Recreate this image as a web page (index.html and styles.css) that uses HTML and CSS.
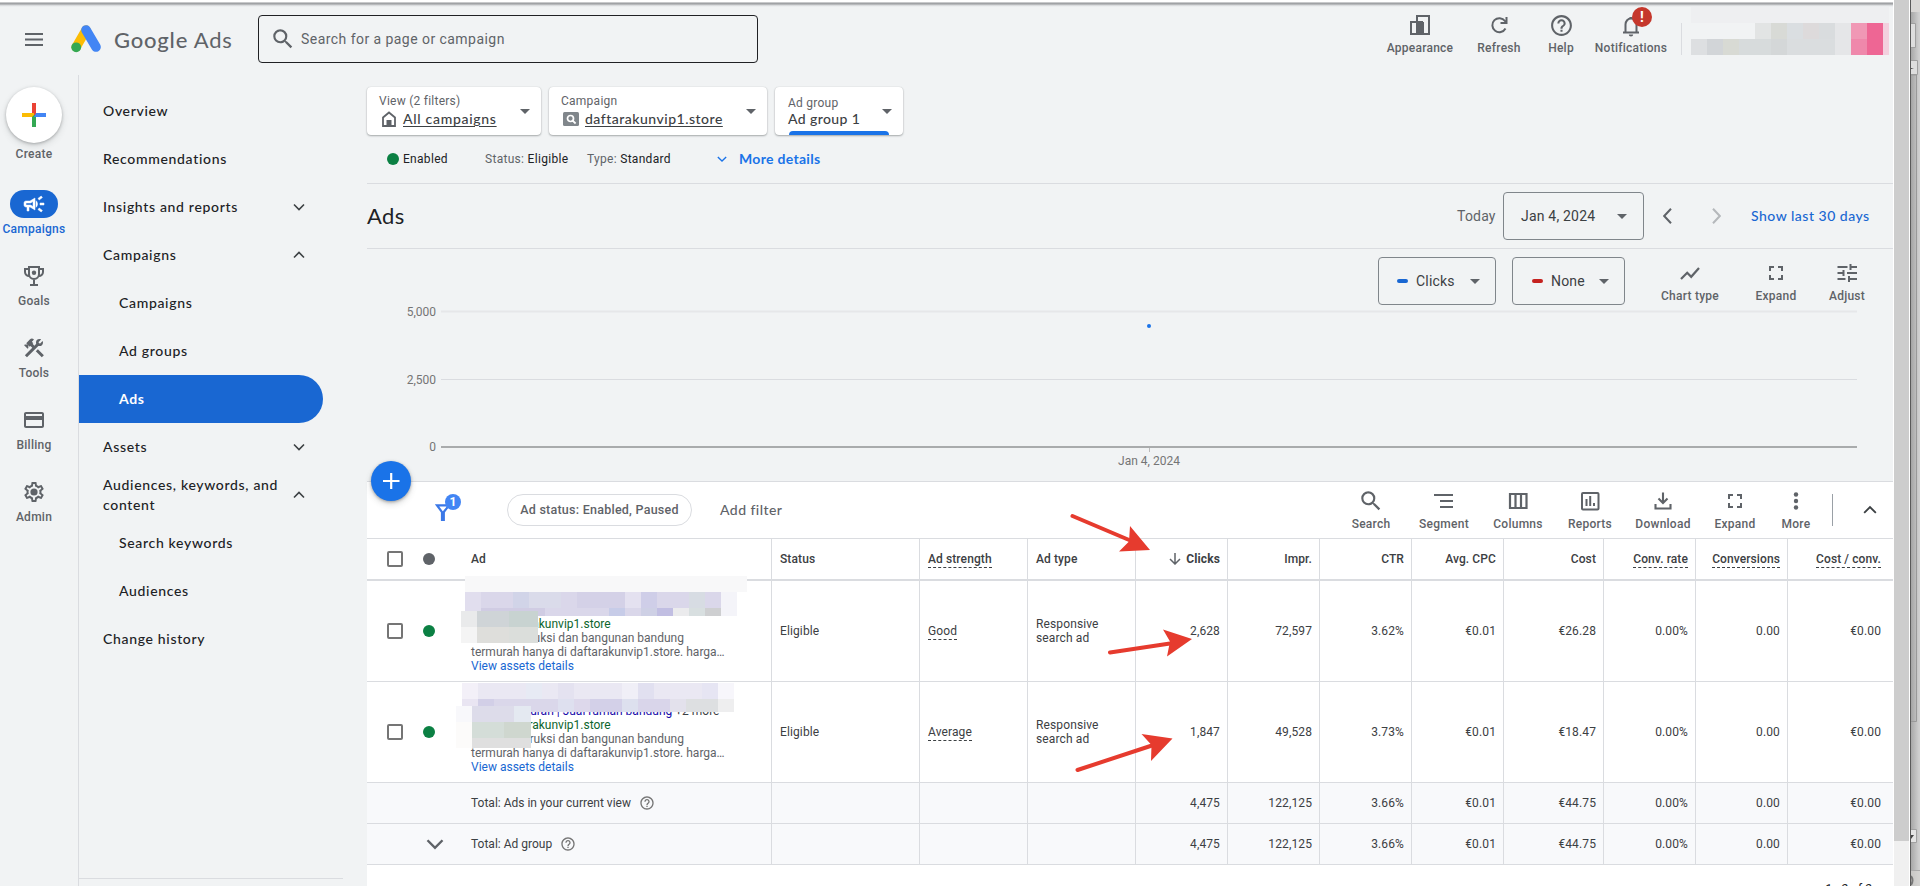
FILE: index.html
```html
<!DOCTYPE html>
<html lang="en">
<head>
<meta charset="utf-8">
<title>Ads - Google Ads</title>
<link rel="stylesheet" href="styles.css">
</head>
<body>
<svg class="defs" width="0" height="0">
  <symbol id="search" viewBox="0 0 24 24"><path d="M15.5 14h-.79l-.28-.27A6.47 6.47 0 0 0 16 9.5 6.5 6.5 0 1 0 9.5 16c1.61 0 3.09-.59 4.23-1.57l.27.28v.79l5 4.99L20.49 19l-4.99-5zm-6 0C7.01 14 5 11.99 5 9.5S7.01 5 9.5 5 14 7.01 14 9.5 11.99 14 9.5 14z"/></symbol>
  <symbol id="down" viewBox="0 0 12 12"><path d="M1 3.5l5 5 5-5" fill="none" stroke="currentColor" stroke-width="1.6"/></symbol>
  <symbol id="up" viewBox="0 0 12 12"><path d="M1 8.5l5-5 5 5" fill="none" stroke="currentColor" stroke-width="1.6"/></symbol>
  <symbol id="caret" viewBox="0 0 10 5"><path d="M0 0h10L5 5z"/></symbol>
  <symbol id="help" viewBox="0 0 24 24"><path d="M11 18h2v-2h-2v2zm1-16C6.48 2 2 6.48 2 12s4.48 10 10 10 10-4.48 10-10S17.52 2 12 2zm0 18c-4.41 0-8-3.59-8-8s3.59-8 8-8 8 3.59 8 8-3.59 8-8 8zm0-14c-2.21 0-4 1.79-4 4h2c0-1.1.9-2 2-2s2 .9 2 2c0 2-3 1.75-3 5h2c0-2.25 3-2.5 3-5 0-2.21-1.79-4-4-4z"/></symbol>
  <symbol id="expand" viewBox="0 0 24 24"><path d="M7 14H5v5h5v-2H7v-3zm-2-4h2V7h3V5H5v5zm12 7h-3v2h5v-5h-2v3zM14 5v2h3v3h2V5h-5z"/></symbol>
</svg>

<div class="app">
  <div class="topedge"></div>
  <header class="header">
    <svg class="menu" width="18" height="14" viewBox="0 0 18 14"><path d="M0 1h18M0 6.500h18M0 12h18" stroke="#5f6368" stroke-width="2"/></svg>
    <svg class="logo" width="30" height="28" viewBox="0 0 30 28"><path d="M5.200 22L15 5" stroke="#fbbc04" stroke-width="9.400" stroke-linecap="round"/><path d="M15 5l10 17" stroke="#4285f4" stroke-width="9.600" stroke-linecap="round"/><circle cx="5.200" cy="22.300" r="4.900" fill="#34a853"/></svg>
    <div class="brand"><b>Google</b> Ads</div>
    <div class="searchbox"><svg width="26" height="26"><use href="#search"/></svg><span>Search for a page or campaign</span></div>
    <div class="tools">
      <div class="tool t-appearance"><svg width="20" height="20" viewBox="0 0 20 20"><path d="M7 6V1h12v18H1V7h6M7 7v12M13 7v12" fill="none" stroke="currentColor" stroke-width="2"/><path d="M7 6h6v13H7z"/></svg><span>Appearance</span></div>
      <div class="tool t-refresh"><svg width="20" height="20" viewBox="0 0 20 20"><path d="M16.500 13.500A7 7 0 1 1 16 6L17 7" fill="none" stroke="currentColor" stroke-width="2"/><path d="M18.500 2v7h-7V7h5V2z"/></svg><span>Refresh</span></div>
      <div class="tool t-help"><svg width="25" height="25"><use href="#help"/></svg><span>Help</span></div>
      <div class="tool t-notif"><svg width="22" height="22" viewBox="0 0 22 22"><path d="M5.500 17V9.500a5.500 6 0 0 1 11 0V17M3 17.500h16" fill="none" stroke="currentColor" stroke-width="2"/><path d="M8.800 19.500h4.400a2.200 2 0 0 1-4.400 0zM9.500 2h3v2h-3z"/></svg><span>Notifications</span><i class="alert">!</i></div>
    </div>
    <div class="account">
      <svg width="198" height="51" viewBox="0 0 198 51"><path d="M0 0h198v16H0z" fill="#eeeff1"/><path d="M64 16h16v16H64z" fill="#e2e4e4"/><path d="M80 16h16v16H80z" fill="#d8dad6"/><path d="M96 16h16v16H96z" fill="#dadee1"/><path d="M112 16h16v16h-16z" fill="#dddadb"/><path d="M128 16h16v16h-16z" fill="#d9dcde"/><path d="M144 16h16v32h-16z" fill="#e5e6e8"/><path d="M0 32h16v16H0z" fill="#dddfe1"/><path d="M16 32h16v16H16z" fill="#d2d5d8"/><path d="M32 32h16v16H32z" fill="#d8dad4"/><path d="M48 32h32v16H48z" fill="#d7dbdc"/><path d="M80 32h16v16H80z" fill="#d4d7d8"/><path d="M96 32h48v16H96z" fill="#dadddf"/><path d="M160 16h16v16h-16z" fill="#f098b5"/><path d="M160 32h16v16h-16z" fill="#ef88ab"/><path d="M176 16h16v32h-16z" fill="#ee6694"/><path d="M192 16h6v32h-6z" fill="#f3d0de"/></svg>
    </div>
  </header>

  <div class="body">
    <aside class="rail">
      <div class="create"><svg width="24" height="24" viewBox="0 0 24 24"><path d="M10 0h4v12h-4z" fill="#ea4335"/><path d="M0 10h12v4H0z" fill="#fbbc04"/><path d="M10 14l2-2h2v12h-4z" fill="#34a853"/><path d="M14 10h10v4H12z" fill="#4285f4"/></svg></div>
      <span class="createlabel">Create</span>
      <div class="railitem on"><i><svg width="24" height="24" viewBox="0 0 24 24"><path d="M18 11v2h4v-2h-4zm-2 6.610c.96.71 2.210 1.650 3.200 2.390.4-.53.8-1.070 1.200-1.600-.99-.74-2.240-1.680-3.200-2.400-.4.540-.8 1.080-1.200 1.610zM20.400 5.600c-.4-.53-.8-1.070-1.200-1.600-.99.740-2.240 1.680-3.200 2.400.4.530.8 1.070 1.200 1.600.96-.72 2.210-1.650 3.200-2.400zM4 9c-1.100 0-2 .9-2 2v2c0 1.100.9 2 2 2h1v4h2v-4h1l5 3V6L8 9H4zm5.030 1.710L11 9.530v4.940l-1.970-1.180-.48-.29H4v-2h4.550l.48-.29zM15.500 12c0-1.330-.58-2.530-1.500-3.350v6.690c.92-.81 1.500-2.010 1.500-3.340z" stroke="#fff" stroke-width=".5"/></svg></i><span>Campaigns</span></div>
      <div class="railitem"><i><svg width="24" height="24" viewBox="0 0 24 24"><path d="M7 3h10v7a5 5 0 0 1-10 0zM7 5H3V8a4 4 0 0 0 4.500 4M17 5h4V8a4 4 0 0 1-4.500 4M12 15v5M8 21h8" fill="none" stroke="currentColor" stroke-width="2"/><circle cx="12" cy="8.800" r="2.200"/></svg></i><span>Goals</span></div>
      <div class="railitem"><i><svg width="24" height="24" viewBox="0 0 24 24"><path d="M13.780 15.300l6 6 2.110-2.160-6-6-2.110 2.160zm3.720-5.200c-.39 0-.81-.05-1.140-.19L4.970 21.250l-2.110-2.110 7.410-7.400L8.500 9.960l-.72.7-1.450-1.410v2.860l-.7.7-3.520-3.560.7-.7h2.810l-1.400-1.410 3.560-3.560a2.976 2.976 0 0 1 4.220 0L9.890 5.740l1.410 1.400-.71.71 1.790 1.780 1.820-1.880c-.14-.33-.2-.75-.2-1.120a3.490 3.490 0 0 1 3.500-3.520c.59 0 1.110.14 1.580.42L16.410 6.200l1.500 1.500 2.670-2.670c.28.47.42.970.42 1.600 0 1.920-1.550 3.470-3.500 3.470z"/></svg></i><span>Tools</span></div>
      <div class="railitem"><i><svg width="24" height="24" viewBox="0 0 24 24"><path d="M20 4H4c-1.110 0-2 .89-2 2v12c0 1.110.89 2 2 2h16c1.110 0 2-.89 2-2V6c0-1.110-.89-2-2-2zm0 14H4v-6h16v6zm0-10H4V6h16v2z"/></svg></i><span>Billing</span></div>
      <div class="railitem"><i><svg width="24" height="24" viewBox="0 0 24 24"><circle cx="12" cy="12" r="3.600"/><path d="M10 22c-.25 0-.46-.18-.5-.42l-.37-2.650c-.63-.25-1.170-.59-1.690-.99l-2.490 1.010c-.22.08-.49 0-.61-.22l-2-3.460c-.13-.22-.07-.49.12-.64l2.110-1.660L4.500 12l.07-1-2.110-1.630c-.19-.15-.25-.42-.12-.64l2-3.460c.12-.22.39-.31.61-.22l2.490 1c.52-.39 1.060-.73 1.690-.98l.37-2.650c.04-.24.25-.42.5-.42h4c.25 0 .46.18.5.42l.37 2.650c.63.25 1.170.59 1.690.98l2.490-1c.22-.09.49 0 .61.22l2 3.460c.13.22.07.49-.12.64L19.430 11l.07 1-.07 1 2.110 1.630c.19.15.25.42.12.64l-2 3.460c-.12.22-.39.31-.61.22l-2.490-1c-.52.39-1.060.73-1.690.98l-.37 2.650c-.04.24-.25.42-.5.42h-4m1.250-18l-.37 2.610c-1.200.25-2.260.89-3.030 1.780L5.440 7.350l-.75 1.300L6.800 10.200a5.550 5.550 0 0 0 0 3.600l-2.120 1.560.75 1.300 2.430-1.040c.77.88 1.820 1.520 3.010 1.760l.37 2.620h1.520l.37-2.610c1.190-.25 2.240-.89 3.010-1.770l2.430 1.040.75-1.300-2.120-1.550c.4-1.170.4-2.440 0-3.610l2.110-1.550-.75-1.300-2.410 1.040a5.420 5.420 0 0 0-3.030-1.770L12.750 4h-1.500z"/></svg></i><span>Admin</span></div>
    </aside>

    <nav class="nav">
      <a>Overview</a>
      <a>Recommendations</a>
      <a>Insights and reports<svg width="12" height="12"><use href="#down"/></svg></a>
      <a>Campaigns<svg width="12" height="12"><use href="#up"/></svg></a>
      <a class="sub">Campaigns</a>
      <a class="sub">Ad groups</a>
      <a class="sub on">Ads</a>
      <a>Assets<svg width="12" height="12"><use href="#down"/></svg></a>
      <a>Audiences, keywords, and<br>content<svg width="12" height="12"><use href="#up"/></svg></a>
      <a class="sub">Search keywords</a>
      <a class="sub">Audiences</a>
      <a>Change history</a>
      <div class="navend"></div>
    </nav>

    <main class="main">
      <section class="scope">
        <div class="card c1"><div><small>View (2 filters)</small><p><svg width="24" height="16" viewBox="0 0 24 16"><path d="M4 15V6.500L10 1.500l6 5V15z" fill="none" stroke="#5f6368" stroke-width="1.800"/><path d="M7.500 9h5v6h-5z" fill="#5f6368"/></svg><u>All campaigns</u></p></div><svg class="caret" width="10" height="5"><use href="#caret"/></svg></div>
        <div class="card c2"><div><small>Campaign</small><p><svg width="24" height="16" viewBox="0 0 24 16"><rect x="2" y="1" width="16" height="14" rx="1.500" fill="#80868b"/><circle cx="9.500" cy="7.500" r="3" fill="none" stroke="#fff" stroke-width="1.700"/><path d="M11.600 9.700l3 2.800" stroke="#fff" stroke-width="1.800"/></svg><u>daftarakunvip1.store</u></p></div><svg class="caret" width="10" height="5"><use href="#caret"/></svg></div>
        <div class="card c3"><div><small>Ad group</small><p>Ad group 1</p></div><svg class="caret" width="10" height="5"><use href="#caret"/></svg><i class="underbar"></i></div>
      </section>
      <section class="status">
        <i class="dot"></i><b class="s1">Enabled</b><span class="s2">Status: <b>Eligible</b></span><span class="s3">Type: <b>Standard</b></span>
        <svg width="10" height="10"><use href="#down"/></svg><a>More details</a>
      </section>
      <section class="titlebar">
        <h1>Ads</h1>
        <span class="today">Today</span>
        <div class="select date"><span>Jan 4, 2024</span><svg width="10" height="5"><use href="#caret"/></svg></div>
        <svg class="prev" width="9" height="16" viewBox="0 0 9 16"><path d="M8 .7L1.200 8 8 15.300" fill="none" stroke="#5f6368" stroke-width="2"/></svg>
        <svg class="next" width="9" height="16" viewBox="0 0 9 16"><path d="M1 .7L7.800 8 1 15.300" fill="none" stroke="#b5b8bb" stroke-width="2"/></svg>
        <a>Show last 30 days</a>
      </section>
      <section class="chart">
        <div class="controls">
          <div class="select m1"><i class="blue"></i><span>Clicks</span><svg width="10" height="5"><use href="#caret"/></svg></div>
          <div class="select m2"><i class="red"></i><span>None</span><svg width="10" height="5"><use href="#caret"/></svg></div>
          <div class="tool k1"><svg width="24" height="24" viewBox="0 0 24 24"><path d="M3 18l6.200-6.200 4 4L21 7" fill="none" stroke="currentColor" stroke-width="2.200"/></svg><span>Chart type</span></div>
          <div class="tool k2"><svg width="24" height="24"><use href="#expand"/></svg><span>Expand</span></div>
          <div class="tool k3"><svg width="24" height="24" viewBox="0 0 24 24"><path d="M2.500 6h10M16 6h6M15.500 3v6M2.500 12h6M12 12h10M8.500 9v6M2.500 18h8M14 18h8M14 15v6" fill="none" stroke="currentColor" stroke-width="2"/></svg><span>Adjust</span></div>
        </div>
        <svg class="plot" width="1526" height="176" viewBox="0 0 1526 176">
          <path d="M74 6.500h1416" stroke="#e6e7e9" stroke-width="2"/>
          <path d="M74 74.500h1416" stroke="#dadce0"/>
          <path d="M74 142h1416" stroke="#a9abac" stroke-width="2"/>
          <path d="M782.500 143v4" stroke="#bbb"/>
          <circle cx="782" cy="21" r="2" fill="#1a73e8"/>
          <g text-anchor="end"><text x="69" y="11">5,000</text><text x="69" y="79">2,500</text><text x="69" y="146">0</text></g>
          <text x="782" y="159.500" text-anchor="middle">Jan 4, 2024</text>
        </svg>
        <button class="fab"><svg width="18" height="18" viewBox="0 0 18 18"><path d="M9.200 1v16M1 9h16.500" stroke="#fff" stroke-width="2.200"/></svg></button>
      </section>
      <section class="filterbar">
        <div class="filter"><svg width="16" height="17" viewBox="0 0 16 17"><path d="M2 1.300h12L8.800 8v8H7V8z" fill="none" stroke="#3b78e7" stroke-width="2.200"/></svg><i>1</i></div>
        <span class="chip">Ad status: Enabled, Paused</span>
        <span class="addfilter">Add filter</span>
        <div class="actions">
          <div class="tool a1"><svg width="26" height="26"><use href="#search"/></svg><span>Search</span></div>
          <div class="tool a2"><svg width="20" height="20" viewBox="0 0 20 20"><path d="M0 4h19M6 10h13M6 16h13" stroke="currentColor" stroke-width="2"/></svg><span>Segment</span></div>
          <div class="tool a3"><svg width="20" height="20" viewBox="0 0 20 20"><path d="M2 3h16.500v14H2zM7.500 3v14M13 3v14" fill="none" stroke="currentColor" stroke-width="2.200"/></svg><span>Columns</span></div>
          <div class="tool a4"><svg width="20" height="20" viewBox="0 0 20 20"><rect x="2" y="2" width="16.500" height="16.500" rx="1" fill="none" stroke="currentColor" stroke-width="2"/><path d="M6.500 8v7M10.200 5v10M14 12v3" stroke="currentColor" stroke-width="2"/></svg><span>Reports</span></div>
          <div class="tool a5"><svg width="20" height="20" viewBox="0 0 20 20"><path d="M10 1.500v10M5.500 7.500L10 12l4.500-4.500M2.500 13v4.500h15V13" fill="none" stroke="currentColor" stroke-width="2.100"/></svg><span>Download</span></div>
          <div class="tool a6"><svg width="24" height="24"><use href="#expand"/></svg><span>Expand</span></div>
          <div class="tool a7"><svg width="20" height="20" viewBox="0 0 20 20"><circle cx="10" cy="3.500" r="2.200"/><circle cx="10" cy="10" r="2.200"/><circle cx="10" cy="16.500" r="2.200"/></svg><span>More</span></div>
          <div class="sep"></div>
          <svg class="collapse" width="14" height="14"><use href="#up"/></svg>
        </div>
      </section>

      <section class="table">
        <div class="row head">
          <div class="ad"><i class="box"></i><i class="dot gray"></i><span>Ad</span></div><div>Status</div><div><u>Ad strength</u></div><div>Ad type</div>
          <div class="n sorted"><svg width="12" height="12" viewBox="0 0 12 12"><path d="M6 0v10.500M1 6l5 5 5-5" fill="none" stroke="#5f6368" stroke-width="1.500"/></svg>Clicks</div><div class="n">Impr.</div><div class="n">CTR</div><div class="n">Avg. CPC</div><div class="n">Cost</div><div class="n"><u>Conv. rate</u></div><div class="n"><u>Conversions</u></div><div class="n"><u>Cost / conv.</u></div>
        </div>
        <div class="row item">
          <div class="ad"><i class="box"></i><i class="dot"></i>
            <div class="copy"><p class="title">&nbsp;</p><p class="url">www.daftarakunvip1.store</p><p>Jasa konstruksi dan bangunan bandung</p><p>termurah hanya di daftarakunvip1.store. harga…</p><p class="link">View assets details</p></div>
            <svg class="mosaic" width="290" height="68" viewBox="0 0 290 68"><path d="M4 0h282v16H4z" fill="#f8f8f9"/><g fill="#dad7ea"><path d="M4 16h256v16H4zM20 32h240v8H20z"/></g><path d="M4 16h16v24H4z" fill="#e1deee"/><path d="M52 16h16v16H52z" fill="#d1d4e8"/><path d="M68 16h32v16H68z" fill="#dadbea"/><path d="M116 16h48v16h-48z" fill="#d4d1e7"/><path d="M164 16h16v16h-16z" fill="#e4e1f0"/><path d="M180 16h16v16h-16z" fill="#cfcee8"/><path d="M228 16h16v16h-16z" fill="#d7dce3"/><path d="M260 16h16v24h-16z" fill="#f4f4f9"/><path d="M20 32h64v8H20z" fill="#d0cce3"/><path d="M148 32h16v8h-16z" fill="#c7cce8"/><path d="M180 32h16v8h-16z" fill="#ced0e5"/><path d="M196 32h16v8h-16z" fill="#c1bee2"/><path d="M212 32h16v8h-16z" fill="#ebebed"/><path d="M228 32h16v8h-16z" fill="#d8dfe0"/><path d="M244 32h16v8h-16z" fill="#cecfd1"/><path d="M0 35h16v16H0z" fill="#e9eaeb"/><path d="M16 35h32v16H16z" fill="#cfd4d7"/><path d="M48 35h29v16H48z" fill="#c8d3d1"/><path d="M0 51h16v16H0z" fill="#f4f4f4"/><path d="M16 51h32v16H16z" fill="#dededb"/><path d="M48 51h29v16H48z" fill="#dbdedb"/></svg>
          </div><div>Eligible</div><div><u>Good</u></div><div>Responsive<br>search ad</div><div class="n">2,628</div><div class="n">72,597</div><div class="n">3.62%</div><div class="n">€0.01</div><div class="n">€26.28</div><div class="n">0.00%</div><div class="n">0.00</div><div class="n">€0.00</div>
        </div>
        <div class="row item">
          <div class="ad"><i class="box"></i><i class="dot"></i>
            <div class="copy"><p class="title"><span>Rumah murah | Jual rumah bandung</span> +2 more</p><p class="url">www.daftarakunvip1.store</p><p>Jasa konstruksi dan bangunan bandung</p><p>termurah hanya di daftarakunvip1.store. harga…</p><p class="link">View assets details</p></div>
            <svg class="mosaic second" width="290" height="68" viewBox="0 0 290 68"><path d="M6 0h272v16H6z" fill="#eae8f3"/><path d="M6 0h16v16H6z" fill="#f3f0f8"/><path d="M70 0h16v16H70z" fill="#e7eaf4"/><path d="M102 0h16v16h-16z" fill="#e4e2f0"/><path d="M166 0h16v16h-16z" fill="#f0eff7"/><path d="M182 0h16v16h-16z" fill="#e1e0f0"/><path d="M246 0h16v16h-16z" fill="#e6e5f3"/><path d="M262 0h16v16h-16z" fill="#f7f6fb"/><path d="M6 16h16v13H6z" fill="#e9e5f2"/><path d="M22 16h16v13H22z" fill="#d2cfe7"/><path d="M38 16h64v13H38z" fill="#dad7ea"/><path d="M102 16h16v13h-16z" fill="#dee0ef"/><path d="M118 16h16v13h-16z" fill="#ddd8eb"/><path d="M134 16h32v13h-32z" fill="#d3d0e8"/><path d="M166 16h16v13h-16z" fill="#dde0ee"/><path d="M182 16h32v13h-32z" fill="#d9d5ea"/><path d="M214 16h16v13h-16z" fill="#e3e1ec"/><path d="M230 16h32v13h-32z" fill="#dddfe1"/><path d="M262 16h16v13h-16z" fill="#eeeeef"/><path d="M0 23h16v16H0z" fill="#f8f8fb"/><path d="M16 23h42v16H16z" fill="#dddcea"/><path d="M58 23h17v16H58z" fill="#e4e9f1"/><path d="M16 39h32v16H16z" fill="#d4ddd8"/><path d="M48 39h27v16H48z" fill="#cfd7cf"/><path d="M0 39h16v26H0z" fill="#fcfbfa"/><path d="M16 55h59v10H16z" fill="#dfdfdf"/></svg>
          </div><div>Eligible</div><div><u>Average</u></div><div>Responsive<br>search ad</div><div class="n">1,847</div><div class="n">49,528</div><div class="n">3.73%</div><div class="n">€0.01</div><div class="n">€18.47</div><div class="n">0.00%</div><div class="n">0.00</div><div class="n">€0.00</div>
        </div>
        <div class="row total">
          <div class="ad"><span class="lead"></span>Total: Ads in your current view<svg width="16" height="16"><use href="#help"/></svg></div><div></div><div></div><div></div><div class="n">4,475</div><div class="n">122,125</div><div class="n">3.66%</div><div class="n">€0.01</div><div class="n">€44.75</div><div class="n">0.00%</div><div class="n">0.00</div><div class="n">€0.00</div>
        </div>
        <div class="row total">
          <div class="ad"><span class="lead"><svg width="18" height="18"><use href="#down"/></svg></span>Total: Ad group<svg width="16" height="16"><use href="#help"/></svg></div><div></div><div></div><div></div><div class="n">4,475</div><div class="n">122,125</div><div class="n">3.66%</div><div class="n">€0.01</div><div class="n">€44.75</div><div class="n">0.00%</div><div class="n">0.00</div><div class="n">€0.00</div>
        </div>
      </section>
      <footer class="pager">1 - 2 of 2</footer>
    </main>
  </div>
</div>
<div class="scrollbar"><i></i></div>
<div class="desktop"><svg width="10" height="886" viewBox="0 0 10 886"><path d="M0 0h10v12H0z" fill="#dad8d6"/><path d="M0 23.500h4.500v24H0M0 60.500h6.500v14H0" fill="#dedede" stroke="#a0a0a0"/><path d="M0 68l3 1H0z" fill="#444"/><path d="M0 75h6v646H0z" fill="#000" fill-opacity=".02"/><path d="M0 75h5.500v646.500H0" fill="none" stroke="#999"/><path d="M0 829.500h5.500v13H0" fill="#e4e4e4" stroke="#a0a0a0"/><path d="M0 835h3l-3 4z" fill="#444"/><path d="M0 870.500h10" stroke="#aaa"/><path d="M0 871h10v15H0z" fill="#d6d4d2" fill-opacity=".7"/><path d="M0 876q3 4 0 9" fill="none" stroke="#777" stroke-width="2"/></svg></div>

<svg class="marks" width="140" height="280" viewBox="1060 500 140 280">
  <g stroke="#e63b2e" stroke-width="4" stroke-linecap="round"><path d="M1072.500 516l59 25M1110 652.500l60-9M1077.500 770l76-25"/></g>
  <g fill="#e63b2e"><path d="M1150 550l-20-24-1 15.500-10 10zM1192 639l-29-9.500 7 12-3 15zM1172.500 738.500l-31-4.500 10 11-.5 16z"/></g>
</svg>
</body>
</html>
```
FILE: styles.css
```css
* { box-sizing: border-box; }
body { margin: 0; width: 1920px; height: 886px; overflow: hidden; display: flex; position: relative; background: #f1f3f4; color: #3c4043; font: 12px/14px Roboto, "Liberation Sans", sans-serif; }
svg { display: block; flex: none; fill: currentColor; }
i { font-style: normal; }
p, h1 { margin: 0; }
.defs { position: absolute; }

.app { width: 1893px; height: 886px; display: flex; flex-direction: column; overflow: hidden; flex: none; }
.topedge { height: 7px; flex: none; background: linear-gradient(#fff 0 2px, #c8c9cb 2px 3px, #a0a2a5 3px 4px, #cfd1d3 5px, #e6e8ea 6px, #f1f3f4); }
.header { height: 68px; flex: none; display: flex; align-items: flex-start; }
.menu { margin: 26px 0 0 25px; }
.logo { margin: 18px 0 0 28px; }
.brand { margin: 19px 0 0 13px; width: 131px; color: #5f6368; font: 22px/28px Lato, sans-serif; letter-spacing: .8px; white-space: nowrap; }
.brand b { font-weight: 500; }
.searchbox { margin: 8px 0 0 13px; width: 500px; flex: none; height: 48px; border: 1px solid #202124; border-radius: 4px; display: flex; align-items: center; padding-left: 11px; color: #5f6368; }
.searchbox span { margin-left: 5px; font-size: 14px; letter-spacing: .45px; }
.tools { display: flex; margin-left: 609px; }
.tool { display: flex; flex-direction: column; align-items: center; color: #5f6368; font-weight: 500; letter-spacing: .25px; white-space: nowrap; position: relative; }
.tool svg { margin: 0 auto; }
.tools .tool { height: 50px; }
.tools .tool svg { margin-top: 8px; }
.tools .tool span { position: absolute; top: 34px; }
.t-appearance { width: 106px; }
.t-refresh { width: 52px; }
.t-help { width: 72px; }
.tools .t-help svg { margin-top: 6px; }
.t-notif { width: 68px; }
.alert { position: absolute; left: 35px; top: 0; width: 20px; height: 20px; border-radius: 50%; background: #c5372c; color: #fff; font: 700 14px/20px Roboto, sans-serif; text-align: center; letter-spacing: 0; }
.account { border-left: 1px solid #dadce0; height: 32px; margin: 16px 0 0 16px; padding-left: 9px; }
.account svg { margin-top: -16px; }

.body { display: flex; flex: 1; min-height: 0; }
.rail { width: 79px; border-right: 1px solid #dadce0; padding-top: 12px; flex: none; }
.create { width: 56px; height: 56px; margin-left: 6px; border-radius: 50%; background: #fff; box-shadow: 0 1px 3px rgba(60,64,67,.35), 0 3px 7px rgba(60,64,67,.15); display: grid; place-items: center; }
.createlabel { display: block; width: 68px; margin: 4px 0 29px; text-align: center; font-weight: 500; color: #5f6368; letter-spacing: .25px; }
.railitem { width: 68px; height: 72px; display: flex; flex-direction: column; align-items: center; color: #5f6368; font-weight: 500; letter-spacing: .25px; }
.railitem i { width: 48px; height: 28px; border-radius: 14px; display: grid; place-items: center; margin-bottom: 4px; }
.railitem.on { color: #1967d2; }
.railitem.on i { background: #1967d2; color: #fff; }

.nav { width: 288px; padding-top: 12px; flex: none; color: #202124; font: 500 14px/20px Lato, sans-serif; letter-spacing: .67px; }
.nav a { display: flex; height: 48px; width: 244px; align-items: center; padding: 0 0 1px 24px; position: relative; white-space: nowrap; }
.nav a svg { position: absolute; left: 214px; color: #3c4043; top: 18px; }
.nav .sub { padding-left: 40px; }
.nav .on { background: #1967d2; color: #fff; font-weight: 700; border-radius: 0 24px 24px 0; padding-bottom: 0; }
.navend { margin-top: 215px; width: 264px; border-top: 1px solid #dadce0; }

.main { width: 1526px; display: flex; flex-direction: column; }
.main > section { flex: none; }
.scope { display: flex; gap: 8px; padding-top: 12px; }
.card { height: 48px; background: #fff; border-radius: 4px; box-shadow: 0 1px 2px rgba(60,64,67,.4), 0 0 1px rgba(60,64,67,.25); display: flex; justify-content: space-between; align-items: center; padding: 0 11px 0 12px; position: relative; color: #5f6368; letter-spacing: .25px; }
.card small { display: block; font-size: 12px; line-height: 14px; margin-top: 1px; }
.card p { display: flex; align-items: center; font: 500 14px/20px Lato, sans-serif; letter-spacing: .5px; color: #3c4043; margin-top: 1px; }
.card u { text-underline-offset: 2px; }
.caret { margin-top: 1px; }
.c1 { width: 174px; }
.c1 p { letter-spacing: .7px; }
.c2 { width: 218px; }
.c3 { width: 128px; padding-left: 13px; }
.c3 small { margin-top: 3px; }
.c3 p { margin-top: -1px; letter-spacing: .4px; }
.underbar { position: absolute; left: 14px; bottom: 0; width: 100px; height: 4px; background: #1a73e8; border-radius: 4px 4px 0 0; }
.status { height: 49px; border-bottom: 1px solid #dadce0; display: flex; align-items: center; color: #5f6368; padding-left: 20px; letter-spacing: .3px; white-space: nowrap; }
.status b { font-weight: 400; color: #202124; }
.dot { width: 12px; height: 12px; border-radius: 50%; background: #0b8043; flex: none; }
.s1 { margin-left: 4px; width: 82px; }
.s2 { width: 102px; }
.s3 { width: 130px; }
.status svg { color: #1a73e8; }
.status a { color: #1a73e8; font: 700 14px/20px Lato, sans-serif; margin-left: 12px; letter-spacing: .3px; }
.titlebar { height: 65px; border-bottom: 1px solid #dadce0; display: flex; align-items: center; }
.titlebar h1 { font: 400 22px/28px Lato, sans-serif; color: #202124; width: 1090px; letter-spacing: .4px; }
.today { font-size: 14px; letter-spacing: .2px; width: 46px; color: #5f6368; }
.select { height: 48px; flex: none; border: 1px solid #80868b; border-radius: 4px; display: flex; align-items: center; font-size: 14px; letter-spacing: .2px; color: #3c4043; }
.select svg { color: #5f6368; margin-left: auto; }
.date { width: 141px; padding: 0 16px 0 17px; }
.prev { margin-left: 19px; }
.next { margin-left: 40px; }
.titlebar a { color: #1967d2; font: 500 14px/20px Lato, sans-serif; letter-spacing: .5px; margin-left: 30px; white-space: nowrap; }

.chart { height: 233px; position: relative; border-bottom: 1px solid #dadce0; display: flex; flex-direction: column; padding-top: 8px; }
.controls { display: flex; height: 48px; padding-left: 1011px; }
.select i { width: 11px; height: 4px; border-radius: 2px; margin-right: 8px; }
.blue { background: #1967d2; }
.red { background: #c5221f; }
.m1 { width: 118px; padding: 0 15px 0 18px; margin-right: 16px; }
.m2 { width: 113px; padding: 0 15px 0 19px; }
.controls .tool { flex: none; }
.controls .tool svg { margin-top: 4px; margin-bottom: 4px; }
.k1 { width: 130px; }
.k2 { width: 42px; }
.k3 { width: 100px; }
.plot text { font: 12px Roboto, sans-serif; fill: #757575; letter-spacing: 0; }
.fab { position: absolute; left: 4px; bottom: -20px; width: 40px; height: 40px; border: 0; padding: 0; border-radius: 50%; background: #1a73e8; box-shadow: 0 1px 3px rgba(0,0,0,.3), 0 3px 6px rgba(60,64,67,.2); display: grid; place-items: center; z-index: 2; }

.filterbar { height: 57px; background: #fff; border-bottom: 1px solid #dadce0; display: flex; align-items: center; white-space: nowrap; }
.filter { position: relative; width: 26px; height: 26px; margin-left: 68px; }
.filter svg { margin-top: 7px; }
.filter i { position: absolute; left: 10px; top: -3px; width: 16px; height: 16px; border-radius: 50%; background: #4285f4; color: #fff; text-align: center; font: 700 12px/16px Roboto, sans-serif; }
.chip { margin-left: 46px; width: 185px; height: 32px; border: 1px solid #dadce0; border-radius: 16px; display: grid; place-items: center; font-weight: 500; font-size: 12.500px; letter-spacing: .25px; color: #5f6368; }
.addfilter { margin-left: 28px; width: 69px; font: 500 14px/20px Lato, sans-serif; letter-spacing: .45px; color: #5f6368; }
.actions { display: flex; height: 56px; margin-left: 545px; padding-top: 6px; }
.actions .tool { width: 74px; height: 40px; flex: none; }
.actions .tool svg { height: 26px; margin-bottom: 3px; }
.actions .a2, .actions .a4, .actions .a6 { width: 72px; }
.actions .a3 { width: 76px; }
.actions .a4 { width: 68px; }
.actions .a5 { width: 78px; }
.actions .a6 { width: 66px; }
.actions .a7 { width: 56px; }
.sep { width: 1px; height: 32px; background: #9aa0a6; margin: 6px 0 0 8px; }
.collapse { margin: 15px 0 0 30px; color: #3c4043; }

.row { display: grid; grid-template-columns: 404px 148px 108px 108px 92px 92px 92px 92px 100px 92px 92px 106px; background: #fff; border-bottom: 1px solid #dadce0; letter-spacing: .12px; }
.row > div { border-left: 1px solid #dadce0; padding: 0 8px; display: flex; align-items: center; }
.row > .ad { border-left: 0; padding: 0 0 0 20px; position: relative; }
.row > .n { justify-content: flex-end; padding-right: 7px; }
.row > .n:last-child { padding-right: 12px; }
.row u { text-decoration: none; border-bottom: 1px dashed #3c4043; line-height: 15px; margin-top: 2px; }
.head { height: 42px; border-bottom-width: 2px; font-weight: 500; letter-spacing: .1px; }
.head > div { padding-bottom: 1px; }
.sorted { font-weight: 700; }
.sorted svg { margin-right: 5px; }
.box { width: 16px; height: 16px; border: 2px solid #757575; border-radius: 2px; margin-right: 20px; flex: none; }
.gray { background: #5f6368; }
.head .dot { margin-right: 36px; }
.item { height: 101px; }
.copy { margin: 14px 0 0 36px; width: 262px; color: #5f6368; white-space: nowrap; letter-spacing: 0; }
.copy .title { color: #3c4043; margin-left: 8px; }
.copy .title span { color: #1a0dab; }
.url { color: #0d652d; }
.link { color: #1967d2; }
.mosaic { position: absolute; left: 94px; top: -5px; }
.mosaic.second { left: 89px; top: 1px; }
.total { height: 41px; background: #f8f9fb; }
.total .ad { letter-spacing: 0; }
.total .ad svg { margin-left: 8px; color: #757575; }
.lead { width: 84px; }
.total .lead svg { margin-left: 39px; color: #5f6368; }
.pager { flex: 1; min-height: 0; background: #fff; text-align: right; padding: 17px 21px 0 0; color: #202124; }

.scrollbar { width: 17px; background: #f0f0f0; border-left: 1px solid #fff; border-right: 1px solid #fff; flex: none; }
.scrollbar i { display: block; height: 841px; background: #cdcdcd; }
.desktop { width: 10px; border-left: 1px solid #5a5a5a; background: linear-gradient(90deg, #a8a8a8, #d0d0d0 90%); flex: none; }
.marks { position: absolute; left: 1060px; top: 500px; z-index: 3; }
```
